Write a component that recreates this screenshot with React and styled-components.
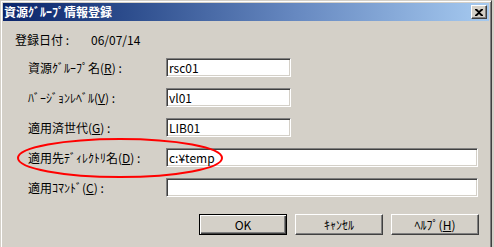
import React from "react"
import styled, { createGlobalStyle } from "styled-components"

const GlobalStyle = createGlobalStyle`
  html, body {
    margin: 0;
    padding: 0;
    background: #d4d0c8;
  }
  body {
    width: 494px;
    height: 247px;
    overflow: hidden;
    font-family: "Noto Sans CJK JP", "Liberation Sans", sans-serif;
    font-size: 12px;
    color: #000;
  }
`

const Window = styled.div`
  position: relative;
  width: 492px;
  height: 252px;
  box-sizing: border-box;
  padding: 2px;
  border: 1px solid;
  border-color: #d4d0c8 #404040 #404040 #d4d0c8;
  box-shadow: inset 1px 1px #ffffff, inset -1px -1px #808080;
  background: #d4d0c8;
`

const TitleBar = styled.div`
  height: 18px;
  display: flex;
  align-items: center;
  justify-content: space-between;
  padding: 0 2px 0 1px;
  background: linear-gradient(to right, #0a246a, #2c4c8c 25%, #6688c0 60%, #a6caf0);
`

const Title = styled.span`
  color: #fff;
  font-weight: bold;
  line-height: 18px;
  white-space: nowrap;
`

const CloseButton = styled.div`
  width: 16px;
  height: 14px;
  box-sizing: border-box;
  border: 1px solid;
  border-color: #ffffff #404040 #404040 #ffffff;
  box-shadow: inset -1px -1px #808080;
  background: #d4d0c8;
  display: flex;
  align-items: center;
  justify-content: center;
`

const Body = styled.div`
  display: flex;
  flex-direction: column;
  padding-top: 9px;
`

const DateRow = styled.div`
  height: 19px;
  display: flex;
  align-items: center;
  padding-left: 12px;
`

const DateLabel = styled.span`
  width: 76px;
  white-space: nowrap;
`

const Form = styled.div`
  margin-top: 9px;
  padding-left: 25px;
  display: grid;
  grid-template-columns: 138px auto;
  grid-auto-rows: 19px;
  row-gap: 11px;
`

const Label = styled.label`
  display: flex;
  align-items: center;
  white-space: nowrap;
`

const Field = styled.input`
  width: ${p => p.$width}px;
  height: 19px;
  box-sizing: border-box;
  margin: 0;
  padding: 0 2px;
  border: 1px solid;
  border-color: #808080 #ffffff #ffffff #808080;
  box-shadow: inset 1px 1px #404040, inset -1px -1px #d4d0c8;
  background: #fff;
  font: inherit;
  color: #000;
  outline: none;
`

const Buttons = styled.div`
  margin-top: 17px;
  padding-left: 196px;
  display: flex;
  gap: 8px;
`

const Button = styled.div`
  width: 88px;
  height: 21px;
  box-sizing: border-box;
  border: 1px solid;
  border-color: ${p => p.$default ? "#000" : "#ffffff #404040 #404040 #ffffff"};
  box-shadow: ${p => p.$default
    ? "inset 1px 1px #ffffff, inset -1px -1px #404040, inset -2px -2px #808080"
    : "inset -1px -1px #808080"};
  display: flex;
  align-items: center;
  justify-content: center;
  white-space: nowrap;
`

const Mark = styled.svg`
  position: absolute;
  left: 15px;
  top: 136px;
  pointer-events: none;
`

const rows = [
  { label: "資源ｸﾞﾙｰﾌﾟ名(", key: "R", value: "rsc01", width: 125 },
  { label: "ﾊﾞｰｼﾞｮﾝﾚﾍﾞﾙ(", key: "V", value: "vl01", width: 125 },
  { label: "適用済世代(", key: "G", value: "LIB01", width: 125 },
  { label: "適用先ﾃﾞｨﾚｸﾄﾘ名(", key: "D", value: "c:¥temp", width: 312 },
  { label: "適用ｺﾏﾝﾄﾞ(", key: "C", value: "", width: 312 },
]

export default function App() {
  return (
    <>
      <GlobalStyle />
      <Window>
        <TitleBar>
          <Title>資源ｸﾞﾙｰﾌﾟ情報登録</Title>
          <CloseButton>
            <svg width="8" height="7" viewBox="0 0 8 7">
              <path d="M0 0h2l2 2 2-2h2v1L5 3.5 8 6v1H6L4 5 2 7H0V6l3-2.5L0 1z" fill="#000" />
            </svg>
          </CloseButton>
        </TitleBar>
        <Body>
          <DateRow>
            <DateLabel>登録日付 :</DateLabel>
            <span>06/07/14</span>
          </DateRow>
          <Form>
            {rows.map(r => (
              <React.Fragment key={r.key}>
                <Label>{r.label}<u>{r.key}</u>) :</Label>
                <Field $width={r.width} defaultValue={r.value} readOnly />
              </React.Fragment>
            ))}
          </Form>
          <Buttons>
            <Button $default>OK</Button>
            <Button>ｷｬﾝｾﾙ</Button>
            <Button>ﾍﾙﾌﾟ(<u>H</u>)</Button>
          </Buttons>
        </Body>
        <Mark width="208" height="42" viewBox="0 0 208 42">
          <ellipse cx="104" cy="21" rx="102" ry="19" fill="none" stroke="#ff0000" strokeWidth="2" />
        </Mark>
      </Window>
    </>
  )
}
